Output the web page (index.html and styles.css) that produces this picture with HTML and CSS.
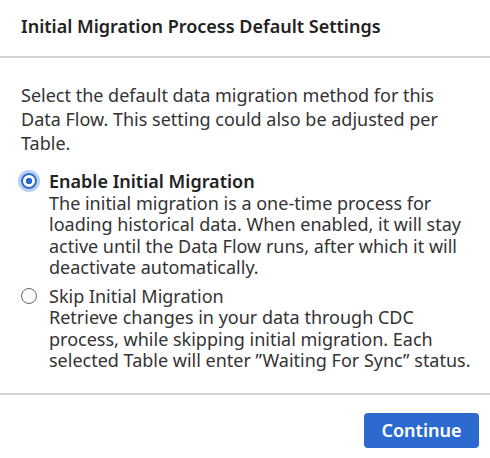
FILE: index.html
```html
<!DOCTYPE html>
<html lang="en">
<head>
    <meta charset="UTF-8">
    <title>Initial Migration Process Default Settings</title>
    <link rel="stylesheet" href="styles.css">
</head>
<body>
    <div class="dialog">
        <div class="dialog-header">
            <h2>Initial Migration Process Default Settings</h2>
        </div>

        <div class="dialog-body">
            <p class="intro">Select the default data migration method for this Data Flow. This setting could also be adjusted per Table.</p>

            <label class="option">
                <input type="radio" name="migration" checked>
                <span class="option-text">
                    <span class="option-title bold">Enable Initial Migration</span>
                    <span class="option-desc">The initial migration is a one-time process for loading historical data. When enabled, it will stay active until the Data Flow runs, after which it will deactivate automatically.</span>
                </span>
            </label>

            <label class="option">
                <input type="radio" name="migration">
                <span class="option-text">
                    <span class="option-title">Skip Initial Migration</span>
                    <span class="option-desc">Retrieve changes in your data through CDC process, while skipping initial migration. Each selected Table will enter ”Waiting For Sync” status.</span>
                </span>
            </label>
        </div>

        <div class="dialog-footer">
            <button class="btn-primary">Continue</button>
        </div>
    </div>
</body>
</html>
```

FILE: styles.css
```css
* {
    margin: 0;
    padding: 0;
    box-sizing: border-box;
}

body {
    font-family: 'Noto Sans', 'Open Sans', sans-serif;
    background: #fff;
    color: #333;
    width: 490px;
}

.dialog {
    background: #fff;
}

.dialog-header {
    height: 58px;
    padding: 0 21px;
    display: flex;
    align-items: center;
    border-bottom: 2px solid #d3d3d3;
}

.dialog-header h2 {
    font-size: 18px;
    font-weight: 600;
    color: #222;
    margin-top: -4px;
}

.dialog-body {
    padding: 25px 14px 21px 21px;
    border-bottom: 2px solid #d3d3d3;
}

.intro {
    font-size: 18px;
    line-height: 24px;
    margin-bottom: 16px;
    padding-right: 7px;
}

.option {
    display: flex;
    align-items: flex-start;
    gap: 12px;
    margin-bottom: 7px;
    cursor: pointer;
}

.option:last-child {
    margin-bottom: 0;
}

.option input {
    appearance: none;
    width: 16px;
    height: 16px;
    margin-top: 2px;
    border: 1.5px solid #666;
    border-radius: 50%;
    flex-shrink: 0;
    background: #fff;
}

.option input:checked {
    border: 2px solid #2d6acf;
    background: radial-gradient(circle, #2d6acf 0 3px, #fff 3.5px);
    box-shadow: 0 0 0 3px #b9cff2;
}

.option-text {
    display: flex;
    flex-direction: column;
    font-size: 18px;
    line-height: 21.5px;
}

.option-title.bold {
    font-weight: 600;
    color: #222;
}

.dialog-footer {
    display: flex;
    justify-content: flex-end;
    padding: 18px 11px 10px;
}

.btn-primary {
    background: #2d6acf;
    color: #fff;
    border: none;
    border-radius: 4px;
    width: 115px;
    height: 35px;
    font-family: inherit;
    font-size: 18px;
    font-weight: 600;
    cursor: pointer;
}
```
